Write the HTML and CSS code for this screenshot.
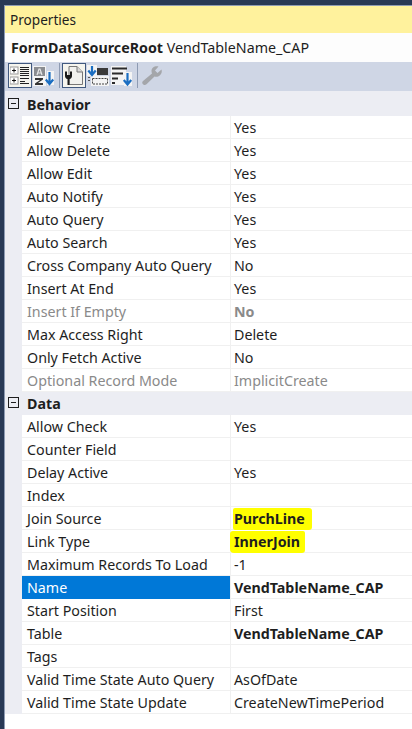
FILE: index.html
```html
<!DOCTYPE html>
<html lang="en">
<head>
  <meta charset="UTF-8" />
  <meta name="viewport" content="width=device-width, initial-scale=1.0"/>
  <title>Properties</title>
  <link rel="stylesheet" href="styles.css">
</head>
<body>

  <div class="panel">
    <div class="title-bar">Properties</div>
    <div class="object-bar"><b>FormDataSourceRoot</b> VendTableName_CAP</div>

    <div class="toolbar">
      <button class="tool active">
        <svg width="20" height="19" viewBox="0 0 20 19">
          <rect x="0" y="1" width="8" height="7" fill="#fff" stroke="#9a9a9a"/>
          <rect x="0" y="11" width="8" height="7" fill="#fff" stroke="#9a9a9a"/>
          <path d="M2 4.500h4M4 2.500v4M2 14.500h4M4 12.500v4" stroke="#111" fill="none"/>
          <path d="M10 1.500h9M10 3.500h9M10 5.500h9M10 7.500h9M10 9.500h9M10 12.500h9M10 15.500h5M10 17.500h9" stroke="#222" fill="none"/>
        </svg>
      </button>
      <button class="tool">
        <svg width="22" height="22" viewBox="0 0 22 22">
          <rect x="0" y="1" width="13" height="20" fill="#f4f4f4"/>
          <rect x="14" y="6" width="7" height="14" fill="#f4f4f4"/>
          <rect x="1" y="2" width="11" height="9" fill="#8a8c90"/>
          <path d="M4 10l2-6h1l2 6M4.800 8h3.400" stroke="#e8e8e8" stroke-width="1.200" fill="none"/>
          <path d="M2 13h8v1.500L5 18h5v2H2v-1.500L7 15H2z" fill="#333"/>
          <path d="M16.500 7v11M12.800 14.500l3.700 4.500 3.700-4.500" stroke="#1b6ec2" stroke-width="2.200" fill="none"/>
        </svg>
      </button>
      <span class="sep"></span>
      <button class="tool active">
        <svg width="20" height="21" viewBox="0 0 20 21">
          <path d="M5 1.500h8l5.500 5.500v12.500H5z" fill="#f1f1ee" stroke="#777"/>
          <path d="M13 1.500V7h5.500" fill="#d8d8d8" stroke="#777"/>
          <path d="M1 6.500h2v3.500h3V6.500h2V11c0 1.500-1 2.800-2.500 3v6h-2v-6C2 13.800 1 12.500 1 11z" fill="#1a1a1a"/>
        </svg>
      </button>
      <button class="tool">
        <svg width="22" height="22" viewBox="0 0 22 22">
          <rect x="0" y="0" width="10" height="11" fill="#f4f4f4"/>
          <rect x="4" y="11" width="18" height="10" fill="#f4f4f4"/>
          <path d="M5 1v8M1.300 5.500L5 10l3.700-4.500" stroke="#1b6ec2" stroke-width="2.200" fill="none"/>
          <rect x="10" y="3" width="11" height="7" fill="#3a3a3a"/>
          <rect x="5.500" y="13.500" width="15" height="5.500" fill="none" stroke="#444" stroke-dasharray="2 1"/>
          <path d="M1 12.500h2M1 15.500h2" stroke="#555" fill="none"/>
        </svg>
      </button>
      <button class="tool">
        <svg width="22" height="22" viewBox="0 0 22 22">
          <rect x="0" y="1" width="15" height="19" fill="#f4f4f4"/>
          <rect x="13" y="7" width="8" height="14" fill="#f4f4f4"/>
          <path d="M1 3.500h15M1 8.500h11M1 13.500h6M1 18h3" stroke="#2a2a2a" stroke-width="2" fill="none"/>
          <path d="M16.500 8v11M12.800 15l3.700 4.500 3.700-4.500" stroke="#1b6ec2" stroke-width="2.200" fill="none"/>
        </svg>
      </button>
      <span class="sep"></span>
      <button class="tool">
        <svg width="22" height="22" viewBox="0 0 22 22">
          <path d="M20.500 4.500l-4 3.500-2.500-2.500 3.500-4c-3.500-1-7 1-7 4.500 0 1 .2 1.500.5 2.500L2 16c-1.500 1.500-.5 2.800 0 3.300s2 1.500 3.500 0L13.500 11.500c4 1.500 8.500-2.500 7-7z" fill="#a4a6aa"/>
        </svg>
      </button>
    </div>

    <div class="grid">
      <div class="category"><span class="toggle"></span>Behavior</div>
      <div class="row"><div class="name">Allow Create</div><div class="value">Yes</div></div>
      <div class="row"><div class="name">Allow Delete</div><div class="value">Yes</div></div>
      <div class="row"><div class="name">Allow Edit</div><div class="value">Yes</div></div>
      <div class="row"><div class="name">Auto Notify</div><div class="value">Yes</div></div>
      <div class="row"><div class="name">Auto Query</div><div class="value">Yes</div></div>
      <div class="row"><div class="name">Auto Search</div><div class="value">Yes</div></div>
      <div class="row"><div class="name">Cross Company Auto Query</div><div class="value">No</div></div>
      <div class="row"><div class="name">Insert At End</div><div class="value">Yes</div></div>
      <div class="row disabled"><div class="name">Insert If Empty</div><div class="value bold">No</div></div>
      <div class="row"><div class="name">Max Access Right</div><div class="value">Delete</div></div>
      <div class="row"><div class="name">Only Fetch Active</div><div class="value">No</div></div>
      <div class="row disabled"><div class="name">Optional Record Mode</div><div class="value">ImplicitCreate</div></div>

      <div class="category"><span class="toggle"></span>Data</div>
      <div class="row"><div class="name">Allow Check</div><div class="value">Yes</div></div>
      <div class="row"><div class="name">Counter Field</div><div class="value"></div></div>
      <div class="row"><div class="name">Delay Active</div><div class="value">Yes</div></div>
      <div class="row"><div class="name">Index</div><div class="value"></div></div>
      <div class="row"><div class="name">Join Source</div><div class="value bold"><span class="marker source">PurchLine</span></div></div>
      <div class="row"><div class="name">Link Type</div><div class="value bold"><span class="marker link">InnerJoin</span></div></div>
      <div class="row"><div class="name">Maximum Records To Load</div><div class="value">-1</div></div>
      <div class="row selected"><div class="name">Name</div><div class="value bold">VendTableName_CAP</div></div>
      <div class="row"><div class="name">Start Position</div><div class="value">First</div></div>
      <div class="row"><div class="name">Table</div><div class="value bold">VendTableName_CAP</div></div>
      <div class="row"><div class="name">Tags</div><div class="value"></div></div>
      <div class="row"><div class="name">Valid Time State Auto Query</div><div class="value">AsOfDate</div></div>
      <div class="row"><div class="name">Valid Time State Update</div><div class="value">CreateNewTimePeriod</div></div>
    </div>
  </div>

</body>
</html>
```

FILE: styles.css
```css
body {
  margin: 0;
  background: #293955;
  font-family: 'Noto Sans', 'Open Sans', sans-serif;
  font-size: 14.25px;
  color: #1e1e1e;
}

.panel {
  margin: 5px 0 0 4px;
  height: 724px;
  background: white;
  border-top: 1px solid #8e9bb3;
  border-left: 1px solid #8e9bb3;
  box-sizing: border-box;
  overflow: hidden;
}

.title-bar {
  height: 27px;
  line-height: 27px;
  padding-left: 5px;
  background: #fff29d;
  font-size: 13.6px;
}

.object-bar {
  height: 29px;
  line-height: 29px;
  padding-left: 6px;
  background: #fdfdfd;
  white-space: nowrap;
}

.toolbar {
  height: 29px;
  padding: 1px 0 0 3px;
  box-sizing: border-box;
  display: flex;
  align-items: flex-start;
  background: #cfd6e5;
}

.tool {
  width: 24px;
  height: 25px;
  padding: 0;
  border: 1px solid transparent;
  background: none;
  display: flex;
  align-items: center;
  justify-content: center;
  flex: none;
}

.tool.active {
  background: #f6f5ee;
  border-color: #41597f;
}

.sep {
  width: 1px;
  height: 25px;
  margin: 0 2px 0 3px;
  background: #8e9bb3;
}

.grid {
  background: #ecedf3;
  padding-left: 17px;
  padding-top: 2px;
}

.category {
  height: 23px;
  line-height: 24px;
  margin-left: -17px;
  padding-left: 22px;
  font-weight: bold;
  position: relative;
  background: #ecedf3;
}

.toggle {
  position: absolute;
  left: 3px;
  top: 5px;
  width: 9px;
  height: 9px;
  border: 1px solid #1e1e1e;
}

.toggle::after {
  content: '';
  position: absolute;
  left: 2px;
  right: 2px;
  top: 4px;
  height: 1px;
  background: #1e1e1e;
}

.row {
  display: grid;
  grid-template-columns: 209px 1fr;
  height: 23px;
  line-height: 23px;
  box-sizing: border-box;
  background: white;
  border-bottom: 1px solid #f0f0f0;
}

.name {
  padding-left: 5px;
  border-right: 1px solid #f0f0f0;
  white-space: nowrap;
  overflow: hidden;
}

.value {
  padding-left: 3px;
  white-space: nowrap;
}

.bold {
  font-weight: bold;
}

.disabled {
  color: #8a8a8a;
}

.selected .name {
  background: #0078d7;
  color: white;
}

.marker {
  display: inline-block;
  line-height: 22px;
  background: #ffff00;
}

.source {
  margin-left: -1px;
  padding: 0 7px 0 1px;
  border-radius: 2px 3px 3px 2px;
}

.link {
  margin-left: -4px;
  padding: 0 5px 0 4px;
  border-radius: 3px 2px 3px 4px;
}
```
